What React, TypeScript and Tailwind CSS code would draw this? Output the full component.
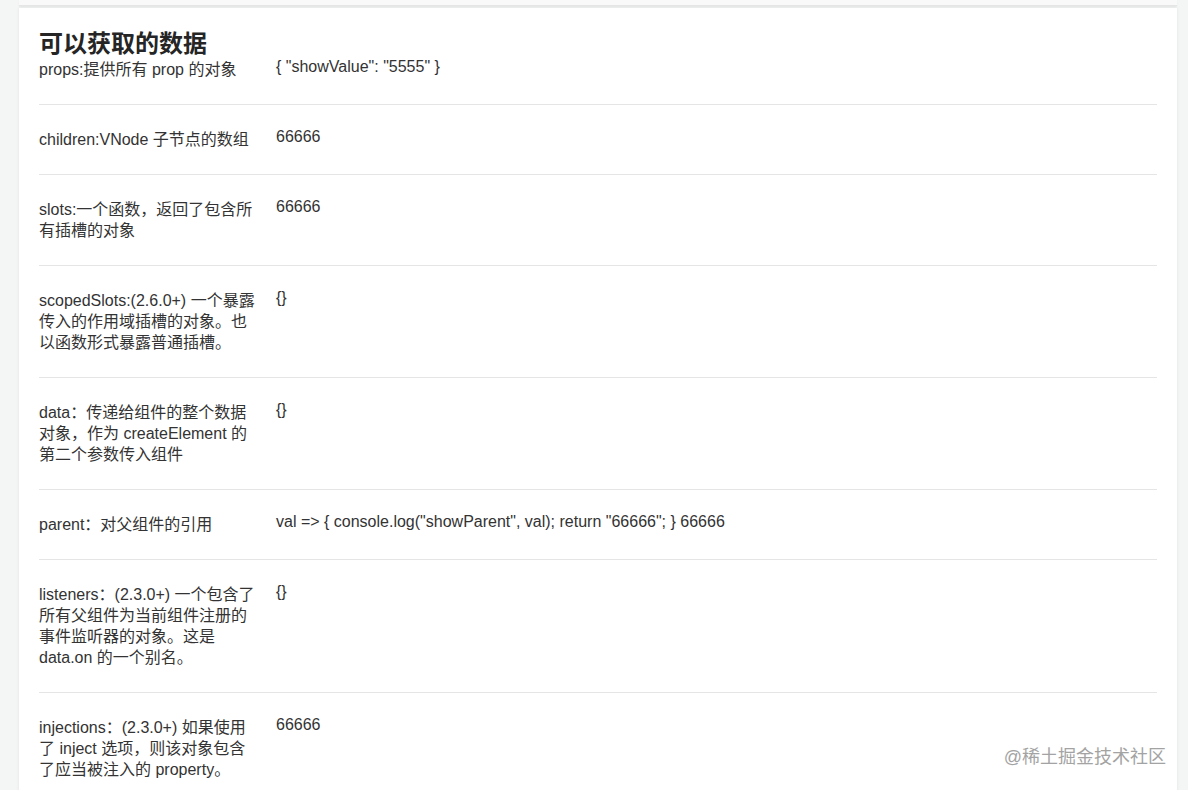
import React from "react";

const rows: { label: string; value: string }[] = [
  { label: "props:提供所有 prop 的对象", value: '{ "showValue": "5555" }' },
  { label: "children:VNode 子节点的数组", value: "66666" },
  { label: "slots:一个函数，返回了包含所有插槽的对象", value: "66666" },
  { label: "scopedSlots:(2.6.0+) 一个暴露传入的作用域插槽的对象。也以函数形式暴露普通插槽。", value: "{}" },
  { label: "data：传递给组件的整个数据对象，作为 createElement 的第二个参数传入组件", value: "{}" },
  { label: "parent：对父组件的引用", value: 'val => { console.log("showParent", val); return "66666"; } 66666' },
  { label: "listeners：(2.3.0+) 一个包含了所有父组件为当前组件注册的事件监听器的对象。这是 data.on 的一个别名。", value: "{}" },
  { label: "injections：(2.3.0+) 如果使用了 inject 选项，则该对象包含了应当被注入的 property。", value: "66666" },
];

export default function App() {
  return (
    <div
      className="relative h-[790px] overflow-hidden bg-[#f4f5f5] text-[#333]"
      style={{ fontFamily: '"Liberation Sans", "Noto Sans CJK SC", sans-serif' }}
    >
      {/* tail of the previous card */}
      <div className="ml-[19px] mr-[11px] h-[6px] bg-[#f9f9f9] border-b border-[#e6e6e6] shadow-[0_1px_2px_rgba(0,0,0,.06)]" />

      <div className="ml-[19px] mr-[11px] mt-[2px] bg-white px-5 pt-[24px] shadow-[0_0_3px_rgba(0,0,0,.08)]">
        <h2 className="text-[24px] leading-[24px] font-bold text-[#252525]">可以获取的数据</h2>

        {rows.map((r, i) => (
          <div key={r.label} className={i === 0 ? "flex" : "flex border-t border-[#e5e5e5]"}>
            <div className={`w-[220px] shrink-0 text-[16px] leading-[21px] pb-[24px] ${i === 0 ? "pt-[3px]" : "pt-[24px]"}`}>
              {r.label}
            </div>
            <div className={`pl-[17px] text-[16px] leading-[21px] ${i === 0 ? "pt-0" : "pt-[21px]"}`}>{r.value}</div>
          </div>
        ))}
      </div>

      <div className="absolute right-[22px] top-[745px] text-[18px] leading-[24px] text-[#a3a3a3]">@稀土掘金技术社区</div>
    </div>
  );
}
